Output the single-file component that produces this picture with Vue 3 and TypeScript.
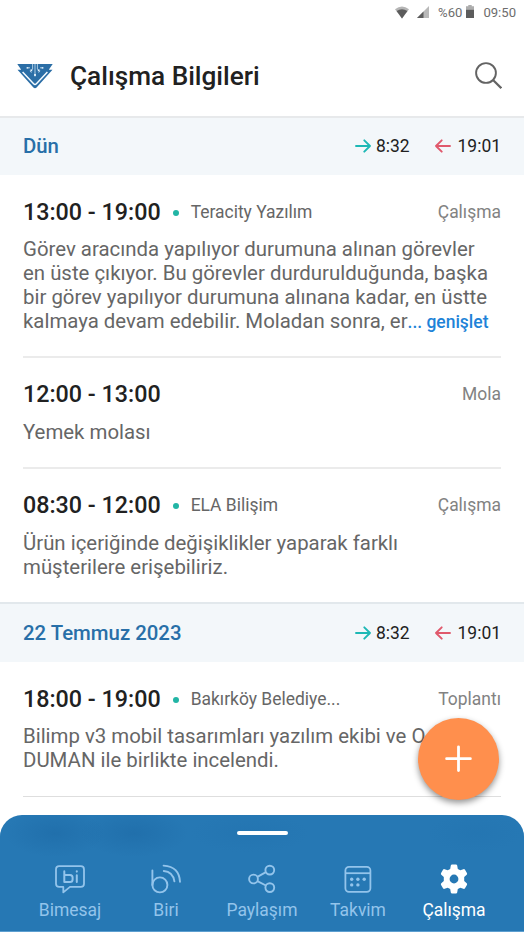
<script setup lang="ts">
interface Entry {
  time: string
  company?: string
  kind: string
  lines: string[]
  more?: string
}
interface Day {
  title: string
  entries: Entry[]
}
interface Tab {
  id: string
  label: string
}

const days: Day[] = [
  {
    title: 'Dün',
    entries: [
      {
        time: '13:00 - 19:00',
        company: 'Teracity Yazılım',
        kind: 'Çalışma',
        lines: [
          'Görev aracında yapılıyor durumuna alınan görevler',
          'en üste çıkıyor. Bu görevler durdurulduğunda, başka',
          'bir görev yapılıyor durumuna alınana kadar, en üstte',
          'kalmaya devam edebilir. Moladan sonra, er',
        ],
        more: '... genişlet',
      },
      { time: '12:00 - 13:00', kind: 'Mola', lines: ['Yemek molası'] },
      {
        time: '08:30 - 12:00',
        company: 'ELA Bilişim',
        kind: 'Çalışma',
        lines: ['Ürün içeriğinde değişiklikler yaparak farklı', 'müşterilere erişebiliriz.'],
      },
    ],
  },
  {
    title: '22 Temmuz 2023',
    entries: [
      {
        time: '18:00 - 19:00',
        company: 'Bakırköy Belediye...',
        kind: 'Toplantı',
        lines: ['Bilimp v3 mobil tasarımları yazılım ekibi ve O', 'DUMAN ile birlikte incelendi.'],
      },
    ],
  },
]

const tabs: Tab[] = [
  { id: 'message', label: 'Bimesaj' },
  { id: 'biri', label: 'Biri' },
  { id: 'share', label: 'Paylaşım' },
  { id: 'calendar', label: 'Takvim' },
  { id: 'work', label: 'Çalışma' },
]
const activeTab = 'work'
</script>

<template>
  <div class="screen">
    <div class="status">
      <svg class="wifi" width="14" height="13" viewBox="0 0 14 13">
        <path d="M0 3.2Q7-2.2 14 3.2L7 12.5Z" fill="#b5b5b5" />
        <path d="M1.6 5Q7 1.4 12.4 5L7 12.5Z" fill="#5c5c5c" />
      </svg>
      <svg class="signal" width="12" height="12" viewBox="0 0 12 12">
        <path d="M12 0V12H0Z" fill="#b9b9b9" />
        <path d="M6.5 5.5V12H0Z" fill="#5c5c5c" />
      </svg>
      <span>%60</span>
      <svg class="battery" width="8" height="13" viewBox="0 0 8 13">
        <path d="M2.3 0H5.7V1.3H8V5H0V1.3H2.3Z" fill="#adadad" />
        <path d="M0 4.8H8V13H0Z" fill="#5c5c5c" />
      </svg>
      <span>09:50</span>
    </div>

    <header class="header">
      <svg class="logo" width="36" height="26" viewBox="0 0 36 26">
        <path d="M.3 1H35.7L31.8 6.8H35.5L19.6 24.4Q18 25.9 16.4 24.4L.5 6.8H4.2Z" fill="#2b6ea6" />
        <path d="M5.6 9L16.6 20.7Q18 22 19.4 20.7L30.4 9" fill="none" stroke="#f4faff" stroke-width="1.5" />
        <path d="M18 1V12.5M15.6 1V6L14.6 7M20.4 1V6L21.4 7M13 4.8H10.5M23 4.8H25.5M14.5 9.5L12.8 8M21.5 9.5L23.2 8" fill="none" stroke="#b9d5ea" stroke-width=".9" />
        <g fill="#e6f2fb">
          <rect x="17.1" y="11" width="1.8" height="2.2" />
          <rect x="13.4" y="6.5" width="1.8" height="1.8" />
          <rect x="20.8" y="6.5" width="1.8" height="1.8" />
          <rect x="9.6" y="4.1" width="1.7" height="1.5" />
          <rect x="24.7" y="4.1" width="1.7" height="1.5" />
        </g>
      </svg>
      <h1>Çalışma Bilgileri</h1>
      <svg class="search" width="27" height="27" viewBox="0 0 27 27" fill="none" stroke="#636363" stroke-width="1.9">
        <circle cx="11" cy="11" r="9.9" />
        <path d="M18 18L26.3 26.2" stroke-width="2.2" />
      </svg>
    </header>

    <main>
      <section v-for="day in days" :key="day.title">
        <div class="day">
          <h2>{{ day.title }}</h2>
          <svg class="arrow" width="16" height="14" viewBox="0 0 16 14" fill="none" stroke="#1db8b5" stroke-width="1.9" stroke-linecap="round" stroke-linejoin="round">
            <path d="M1 7H15M9.3 1.3L15 7L9.3 12.7" />
          </svg>
          <span class="in">8:32</span>
          <svg class="arrow" width="16" height="14" viewBox="0 0 16 14" fill="none" stroke="#e0596c" stroke-width="1.9" stroke-linecap="round" stroke-linejoin="round">
            <path d="M15 7H1M6.7 1.3L1 7L6.7 12.7" />
          </svg>
          <span class="out">19:01</span>
        </div>
        <article v-for="entry in day.entries" :key="entry.time" class="entry">
          <div class="top">
            <strong>{{ entry.time }}</strong>
            <template v-if="entry.company">
              <i class="dot"></i>
              <span class="company">{{ entry.company }}</span>
            </template>
            <span class="kind">{{ entry.kind }}</span>
          </div>
          <p>
            <span v-for="(line, i) in entry.lines" :key="i" class="line">{{ line }}<b v-if="entry.more && i === entry.lines.length - 1">{{ entry.more }}</b></span>
          </p>
        </article>
      </section>
    </main>

    <button class="fab" aria-label="+">
      <svg width="27" height="28" viewBox="0 0 27 28" stroke="#fff" stroke-width="2.8" stroke-linecap="round">
        <path d="M13.5 1.8V25.6M1.6 13.7H25.4" />
      </svg>
    </button>

    <nav class="nav">
      <div class="handle"></div>
      <div class="tabs">
        <div v-for="tab in tabs" :key="tab.id" class="tab" :class="{ active: tab.id === activeTab }">
          <svg v-if="tab.id === 'message'" width="30" height="30" viewBox="0 0 30 30" fill="none" stroke="currentColor" stroke-width="1.8" stroke-linejoin="round" stroke-linecap="round">
            <path d="M4.2 2.2H25.8Q29 2.2 29 5.4V19.7Q29 22.9 25.8 22.9H15L8.3 28.4V22.9H4.2Q1 22.9 1 19.7V5.4Q1 2.2 4.2 2.2Z" />
            <path d="M9.3 7.3V18H15Q17.6 18 17.6 15.5V13.4Q17.6 10.9 15 10.9H9.3M21.8 11.2V18" stroke-width="2" />
            <path d="M21.8 7.3V7.6" stroke-width="2.1" />
          </svg>
          <svg v-else-if="tab.id === 'biri'" width="30" height="30" viewBox="0 0 30 30" fill="none" stroke="currentColor" stroke-width="1.9" stroke-linecap="round">
            <circle cx="8.9" cy="20.9" r="7.5" />
            <path d="M1.4 6.5V20.9M12.6 1.6Q28.3 2.6 29 17.8M12.8 7Q21.9 7.8 23.4 17.3" />
          </svg>
          <svg v-else-if="tab.id === 'share'" width="30" height="30" viewBox="0 0 30 30" fill="none" stroke="currentColor" stroke-width="1.9">
            <circle cx="6.5" cy="15" r="4.4" />
            <circle cx="22.8" cy="6.1" r="4.4" />
            <circle cx="22.8" cy="23.6" r="4.4" />
            <path d="M10.4 12.9L18.9 8.2M10.4 17.1L18.9 21.5" />
          </svg>
          <svg v-else-if="tab.id === 'calendar'" width="30" height="30" viewBox="0 0 30 30" fill="none" stroke="currentColor" stroke-width="1.8">
            <rect x="2.4" y="2.8" width="25" height="25" rx="3.6" />
            <path d="M2.4 9.2H27.4" />
            <g fill="currentColor" stroke="none">
              <circle cx="8.7" cy="15.3" r="1.7" /><circle cx="14.9" cy="15.3" r="1.7" /><circle cx="21.2" cy="15.3" r="1.7" />
              <circle cx="8.7" cy="20.9" r="1.7" /><circle cx="14.9" cy="20.9" r="1.7" />
            </g>
          </svg>
          <svg v-else width="30" height="30" viewBox="0 0 30 30">
            <path fill="currentColor" fill-rule="evenodd" d="M11.8 1.6Q12 .5 13.1 .5H16.9Q18 .5 18.2 1.6L18.8 4.9L21.3 6.3L24.4 5.2Q25.4 4.8 26 5.8L27.9 9Q28.5 10 27.7 10.7L25.2 12.9V17.1L27.7 19.3Q28.5 20 27.9 21L26 24.2Q25.4 25.2 24.4 24.8L21.3 23.7L18.8 25.1L18.2 28.4Q18 29.5 16.9 29.5H13.1Q12 29.5 11.8 28.4L11.2 25.1L8.7 23.7L5.6 24.8Q4.6 25.2 4 24.2L2.1 21Q1.5 20 2.3 19.3L4.8 17.1V12.9L2.3 10.7Q1.5 10 2.1 9L4 5.8Q4.6 4.8 5.6 5.2L8.7 6.3L11.2 4.9ZM15 10.6A4.4 4.4 0 1 0 15 19.4A4.4 4.4 0 1 0 15 10.6Z" />
          </svg>
          <span>{{ tab.label }}</span>
        </div>
      </div>
    </nav>
  </div>
</template>

<style>
body {
  margin: 0;
  background: #fff;
}
</style>

<style scoped>
* {
  box-sizing: border-box;
}
.screen {
  position: relative;
  width: 524px;
  height: 932px;
  overflow: hidden;
  background: #fff;
  font-family: Roboto, sans-serif;
  color: #212121;
}
.status {
  display: flex;
  align-items: center;
  justify-content: flex-end;
  height: 24px;
  padding-right: 8px;
  font-size: 13.1px;
  color: #6d6d6d;
}
.wifi {
  margin-right: 8px;
}
.signal {
  margin-right: 9px;
}
.battery {
  margin: 0 9px 2px 4px;
}
.header {
  display: flex;
  align-items: center;
  height: 94px;
  padding: 0 22px 0 17px;
  border-bottom: 2px solid #e7e9eb;
}
.logo {
  margin: 12px 17px 0 0;
}
h1 {
  margin: 12px 0 0;
  font-size: 26.2px;
  line-height: 32px;
  font-weight: 500;
}
.search {
  margin: 11px 0 0 auto;
}
.day {
  display: flex;
  align-items: center;
  height: 57px;
  padding: 0 23px 2px;
  background: #f3f7fa;
  font-size: 17.47px;
}
section + section .day {
  height: 60px;
  padding-bottom: 1px;
  border-top: 2px solid #e2e8ec;
}
h2 {
  flex: 1;
  margin: 0;
  font-size: 20.38px;
  font-weight: 500;
  color: #286fa8;
}
.in {
  width: 64px;
  padding-left: 5px;
}
.arrow {
  margin-top: 1px;
}
.out {
  width: 50px;
  text-align: right;
}
.entry {
  margin: 0 23px;
  padding: 22px 0 23px;
  border-bottom: 2px solid #ebebeb;
}
.entry + .entry {
  padding-top: 21px;
}
.entry + .entry p {
  margin-top: 11px;
}
.entry:last-child {
  border-bottom: 0;
}
section:last-child .entry {
  padding-bottom: 24px;
  border-bottom: 1px solid #dedede;
}
.top {
  display: flex;
  align-items: center;
  height: 30px;
  font-size: 17.47px;
}
strong {
  font-size: 23.29px;
  font-weight: 500;
}
.dot {
  width: 6px;
  height: 6px;
  margin: 1px 12px 0 12px;
  border-radius: 50%;
  background: #22b5a5;
}
.company {
  color: #666;
}
.kind {
  margin-left: auto;
  color: #828282;
}
p {
  margin: 10px 0 0;
  font-size: 20.4px;
  line-height: 24px;
  color: #666;
}
.line {
  display: block;
  height: 24px;
  white-space: nowrap;
}
b {
  font-size: 17.47px;
  font-weight: 500;
  color: #1e83d8;
}
.fab {
  position: absolute;
  left: 418px;
  top: 718px;
  width: 81px;
  height: 82px;
  display: flex;
  align-items: center;
  justify-content: center;
  padding: 0;
  border: 0;
  border-radius: 50%;
  background: #ff8f4d;
  box-shadow: 0 3px 6px rgba(0, 0, 0, 0.42);
}
.nav {
  position: absolute;
  left: 0;
  bottom: 1px;
  width: 524px;
  height: 116px;
  border-radius: 22px 22px 0 0;
  background:
    radial-gradient(ellipse 50px 24px at 55px 18px, rgba(24, 98, 158, 0.38), transparent),
    radial-gradient(ellipse 54px 24px at 134px 18px, rgba(24, 98, 158, 0.38), transparent),
    radial-gradient(ellipse 60px 20px at 250px 18px, rgba(27, 105, 166, 0.2), transparent),
    radial-gradient(ellipse 48px 20px at 475px 18px, rgba(27, 105, 166, 0.15), transparent),
    #2678b4;
  box-shadow: 0 1px 0 #5d9fd0;
}
.handle {
  width: 51px;
  height: 4px;
  margin: 16px auto 0;
  border-radius: 2px;
  background: #fff;
}
.tabs {
  display: grid;
  grid-template-columns: repeat(5, 96px);
  justify-content: center;
  margin-top: 29px;
}
.tab {
  display: flex;
  flex-direction: column;
  align-items: center;
  font-size: 17.47px;
  line-height: 22px;
  color: #93c4eb;
}
.tab span {
  margin-top: 5px;
}
.active {
  color: #fff;
}
</style>
